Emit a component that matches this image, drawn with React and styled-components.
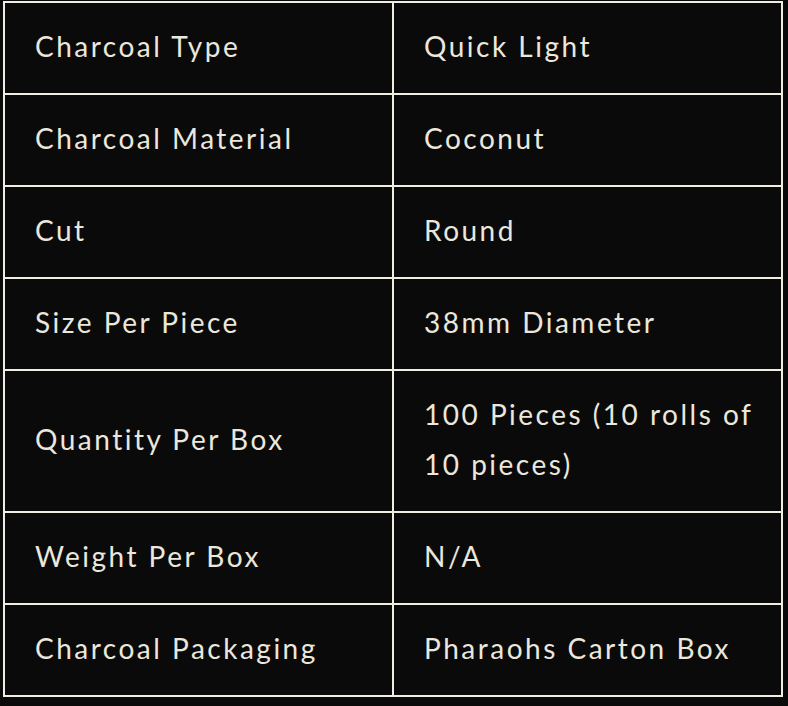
import React from 'react';
import styled, { createGlobalStyle } from 'styled-components';

const GlobalStyle = createGlobalStyle`
  html, body {
    margin: 0;
    padding: 0;
    background: #0a0a0a;
  }
`;

const specs = [
  { label: 'Charcoal Type', value: 'Quick Light' },
  { label: 'Charcoal Material', value: 'Coconut' },
  { label: 'Cut', value: 'Round' },
  { label: 'Size Per Piece', value: '38mm Diameter' },
  { label: 'Quantity Per Box', value: '100 Pieces (10 rolls of 10 pieces)' },
  { label: 'Weight Per Box', value: 'N/A' },
  { label: 'Charcoal Packaging', value: 'Pharaohs Carton Box' },
];

const Page = styled.div`
  padding: 1px 5px 9px 3px;
  background: #0a0a0a;
`;

const SpecTable = styled.table`
  width: 780px;
  border-collapse: collapse;
  table-layout: fixed;
  font-family: Lato, "Liberation Sans", sans-serif;
  color: #ebe7dd;
`;

const Cell = styled.td`
  width: 50%;
  border: 2px solid #f1ede3;
  padding: 18px 22px 22px 30px;
  font-size: 28px;
  line-height: 50px;
  letter-spacing: 2.5px;
  font-weight: 400;
  vertical-align: middle;
`;

const SpecTableView = () => (
  <SpecTable>
    <tbody>
      {specs.map((row) => (
        <tr key={row.label}>
          <Cell>{row.label}</Cell>
          <Cell>{row.value}</Cell>
        </tr>
      ))}
    </tbody>
  </SpecTable>
);

export default function App() {
  return (
    <Page>
      <GlobalStyle />
      <SpecTableView />
    </Page>
  );
}
